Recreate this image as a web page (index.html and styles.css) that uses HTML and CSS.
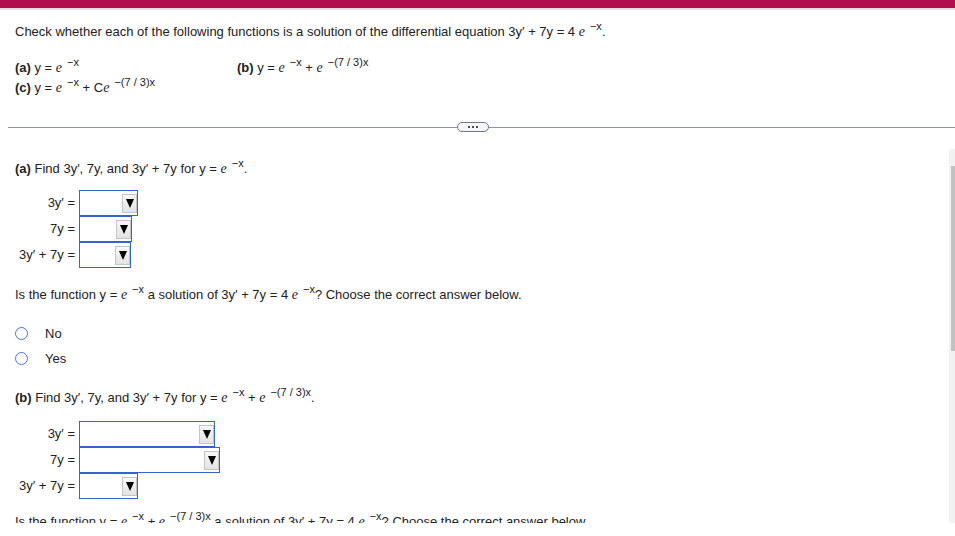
FILE: index.html
```html
<!DOCTYPE html>
<html>
<head>
<meta charset="utf-8">
<link rel="stylesheet" href="styles.css">
</head>
<body>
<div class="topbar"></div>
<div class="header">
  <p class="q">Check whether each of the following functions is a solution of the differential equation 3y&prime; + 7y = 4 <i class="e">e</i><sup class="sp">&minus;x</sup>.</p>
  <div class="choices">
    <div><b>(a)</b> y = <i class="e">e</i><sup class="sp">&minus;x</sup></div>
    <div><b>(b)</b> y = <i class="e">e</i><sup class="sp">&minus;x</sup> + <i class="e">e</i><sup class="sp">&minus;(7 / 3)x</sup></div>
    <div><b>(c)</b> y = <i class="e">e</i><sup class="sp">&minus;x</sup> + C<i class="e">e</i><sup class="sp">&minus;(7 / 3)x</sup></div>
  </div>
</div>
<div class="divider">
  <div class="line left"></div>
  <div class="pill"><span></span><span></span><span></span></div>
  <div class="line right"></div>
</div>
<div class="pane">
  <div class="content">
    <p class="title t-a"><b>(a)</b> Find 3y&prime;, 7y, and 3y&prime; + 7y for y = <i class="e">e</i><sup class="sp">&minus;x</sup>.</p>
    <div class="answers">
      <div class="lbl">3y&prime; =</div><div class="box w58"><span class="btn"><span class="tri"></span></span></div>
      <div class="lbl">7y =</div><div class="box w52"><span class="btn"><span class="tri"></span></span></div>
      <div class="lbl">3y&prime; + 7y =</div><div class="box w51"><span class="btn"><span class="tri"></span></span></div>
    </div>
    <p class="ask">Is the function y = <i class="e">e</i><sup class="sp">&minus;x</sup> a solution of 3y&prime; + 7y = 4 <i class="e">e</i><sup class="sp">&minus;x</sup>? Choose the correct answer below.</p>
    <div class="radios">
      <label class="radio"><span class="circle"></span><span>No</span></label>
      <label class="radio"><span class="circle"></span><span>Yes</span></label>
    </div>
    <p class="title t-b"><b>(b)</b> Find 3y&prime;, 7y, and 3y&prime; + 7y for y = <i class="e">e</i><sup class="sp">&minus;x</sup> + <i class="e">e</i><sup class="sp">&minus;(7 / 3)x</sup>.</p>
    <div class="answers">
      <div class="lbl">3y&prime; =</div><div class="box w136"><span class="btn"><span class="tri"></span></span></div>
      <div class="lbl">7y =</div><div class="box w141"><span class="btn"><span class="tri"></span></span></div>
      <div class="lbl">3y&prime; + 7y =</div><div class="box w59"><span class="btn"><span class="tri"></span></span></div>
    </div>
    <p class="ask last">Is the function y = <i class="e">e</i><sup class="sp">&minus;x</sup> + <i class="e">e</i><sup class="sp">&minus;(7 / 3)x</sup> a solution of 3y&prime; + 7y = 4 <i class="e">e</i><sup class="sp">&minus;x</sup>? Choose the correct answer below.</p>
  </div>
  <div class="scrollbar">
    <div class="arrow up"></div>
    <div class="thumb"></div>
    <div class="rest"></div>
    <div class="arrow down"></div>
  </div>
</div>
</body>
</html>
```

FILE: styles.css
```css
html, body {
  margin: 0;
  padding: 0;
  background: #ffffff;
}
body {
  font-family: "Liberation Sans", Arial, sans-serif;
  font-size: 13px;
  color: #222222;
  width: 955px;
  height: 536px;
  overflow: hidden;
}
p { margin: 0; }
.topbar {
  height: 8px;
  background: #b00e4e;
  border-bottom: 2px solid #e4dde1;
}
.header {
  padding: 13px 15px 0 15px;
}
.q {
  line-height: 18px;
  height: 18px;
}
.e {
  font-family: "Liberation Serif", "Times New Roman", serif;
  font-style: italic;
  font-size: 14px;
}
.sp {
  font-size: 11px;
  vertical-align: 6px;
  line-height: 0;
  margin-left: 5px;
}
.choices {
  margin-top: 17px;
  display: grid;
  grid-template-columns: 222px auto;
  grid-auto-rows: 20px;
  align-items: center;
}
.divider {
  margin-top: 24px;
  display: flex;
  align-items: center;
  height: 10px;
  padding-left: 8px;
}
.line {
  height: 1px;
  background: #8e939a;
}
.line.left { width: 449px; }
.line.right { flex: 1; }
.pill {
  width: 30px;
  height: 8px;
  border: 1px solid #737880;
  border-radius: 5px;
  background: #f4f5f7;
  display: flex;
  justify-content: center;
  align-items: center;
  gap: 2px;
}
.pill span {
  width: 2px;
  height: 2px;
  background: #4a4f57;
}
.pane {
  margin-top: 17px;
  height: 374px;
  display: flex;
}
.content {
  flex: 1;
  overflow: hidden;
  padding-left: 15px;
}
.title {
  line-height: 18px;
  white-space: nowrap;
}
.t-a { margin-top: 11px; }
.t-b { margin-top: 18px; }
.answers {
  margin-top: 12px;
  display: grid;
  grid-template-columns: 60px auto;
  column-gap: 4px;
  justify-content: start;
  align-items: center;
}
.t-b + .answers { margin-top: 14px; }
.lbl {
  text-align: right;
  white-space: nowrap;
  line-height: 18px;
}
.box {
  height: 26px;
  box-sizing: border-box;
  border: 1px solid #3366cc;
  background: #ffffff;
  display: flex;
  justify-content: flex-end;
  align-items: center;
  padding-right: 0;
}
.w58 { width: 59px; }
.w52 { width: 53px; }
.w51 { width: 52px; }
.w136 { width: 136px; }
.w141 { width: 141px; }
.w59 { width: 59px; }
.btn {
  width: 15px;
  height: 19px;
  box-sizing: border-box;
  border: 1px solid #c4c4c4;
  background: linear-gradient(#f7f7f7, #e4e4e4);
  display: flex;
  justify-content: center;
  align-items: center;
}
.tri {
  width: 0;
  height: 0;
  border-left: 4.5px solid transparent;
  border-right: 4.5px solid transparent;
  border-top: 9px solid #000000;
}
.ask {
  margin-top: 18px;
  line-height: 18px;
  white-space: nowrap;
}
.ask.last { margin-top: 14px; }
.radios {
  margin-top: 17px;
  display: flex;
  flex-direction: column;
}
.radio {
  height: 25px;
  display: flex;
  align-items: center;
}
.circle {
  width: 13px;
  height: 13px;
  box-sizing: border-box;
  border: 1.5px solid #4a73c9;
  border-radius: 50%;
  margin-right: 17px;
}
.scrollbar {
  width: 6px;
  background: #f1f1f1;
  display: flex;
  flex-direction: column;
  align-items: flex-end;
}
.arrow {
  height: 10px;
  width: 6px;
}
.thumb {
  margin-top: 7px;
  width: 4px;
  height: 185px;
  background: #c1c1c1;
}
.rest { flex: 1; }
```
